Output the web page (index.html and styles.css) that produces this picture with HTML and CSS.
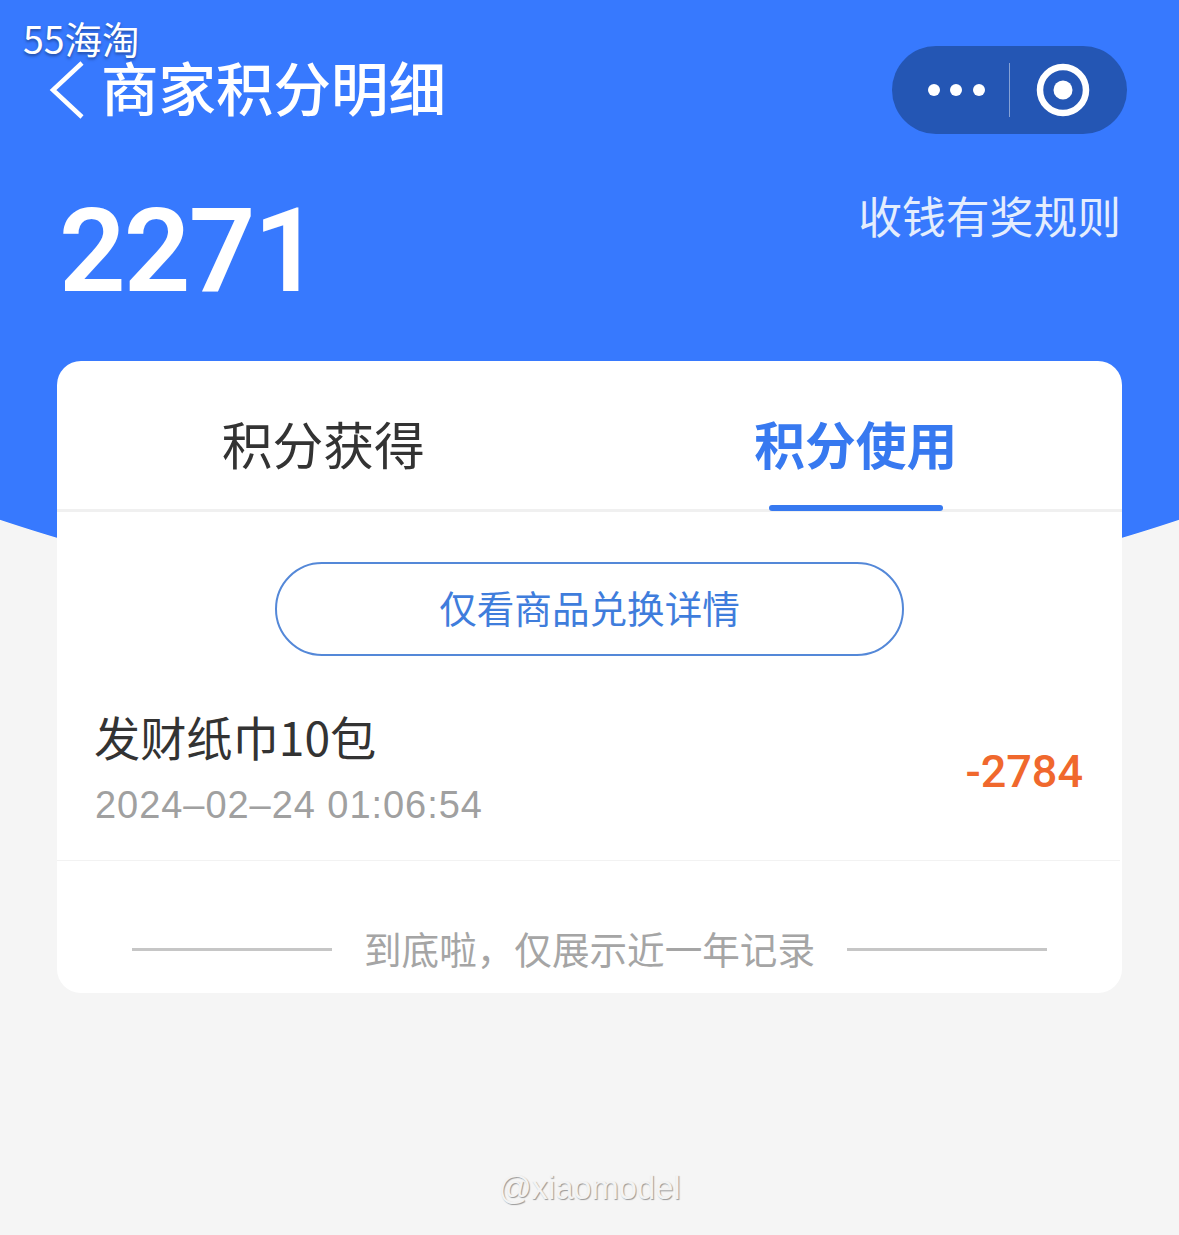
FILE: index.html
```html
<!DOCTYPE html>
<html lang="zh-CN">
<head>
<meta charset="utf-8">
<title>商家积分明细</title>
<link rel="stylesheet" href="styles.css">
</head>
<body>
<div class="page">
  <div class="app-tag">55海淘</div>
  <header class="navbar">
    <div class="nav-left">
      <svg class="back" width="36" height="58" viewBox="0 0 36 58"><path d="M33 2 L4 29 L33 56" fill="none" stroke="#fff" stroke-width="4.5"/></svg>
      <h1 class="title">商家积分明细</h1>
    </div>
    <div class="capsule">
      <svg class="cap-icon" width="235" height="88" viewBox="0 0 235 88">
        <circle cx="42" cy="44" r="6" fill="#fff"/>
        <circle cx="64" cy="44" r="6" fill="#fff"/>
        <circle cx="87" cy="44" r="6" fill="#fff"/>
        <rect x="117" y="17" width="1" height="54" fill="#fff" opacity=".45"/>
        <circle cx="171" cy="44" r="23" fill="none" stroke="#fff" stroke-width="6.5"/>
        <circle cx="171" cy="44" r="9.5" fill="#fff"/>
      </svg>
    </div>
  </header>
  <section class="summary">
    <div class="points">2271</div>
    <div class="rules">收钱有奖规则</div>
  </section>
  <main class="card">
    <div class="tabs">
      <div class="tab">积分获得</div>
      <div class="tab active">积分使用</div>
    </div>
    <div class="filter-wrap"><div class="filter">仅看商品兑换详情</div></div>
    <div class="record">
      <div class="record-info">
        <div class="record-name">发财纸巾10包</div>
        <div class="record-date">2024–02–24 01:06:54</div>
      </div>
      <div class="record-amount">-2784</div>
    </div>
    <div class="end">
      <span class="end-line"></span>
      <span class="end-text">到底啦，仅展示近一年记录</span>
      <span class="end-line"></span>
    </div>
  </main>
  <div class="watermark">@xiaomodel</div>
</div>
</body>
</html>
```
FILE: styles.css
```css
* { box-sizing: border-box; }
html, body { margin: 0; padding: 0; }
body { font-family: "Noto Sans CJK SC", "Noto Sans", sans-serif; }
.page {
  position: relative;
  width: 1179px;
  height: 1235px;
  overflow: hidden;
  background: radial-gradient(circle 1863px at 589.5px -1247px, #3779fe 99.95%, #f5f5f5 100%);
}
.app-tag {
  position: absolute;
  left: 23px;
  top: 20px;
  font-size: 37.5px;
  line-height: 36px;
  color: #fff;
  text-shadow: 0 2px 3px rgba(20, 40, 90, .55);
}
.navbar {
  display: flex;
  justify-content: space-between;
  align-items: center;
  height: 88px;
  padding: 0 52px 0 49px;
  position: relative;
  top: 46px;
}
.nav-left { display: flex; align-items: center; gap: 16px; }
.back { display: block; }
.title {
  margin: 0;
  padding-bottom: 8px;
  font-size: 57.5px;
  line-height: 56px;
  font-weight: 500;
  color: #fff;
}
.capsule {
  width: 235px;
  height: 88px;
  border-radius: 44px;
  background: #2456b4;
}
.cap-icon { display: block; }
.summary {
  display: flex;
  justify-content: space-between;
  align-items: flex-start;
  height: 227px;
  margin-top: 46px;
  padding: 0 58px 0 59px;
}
.points {
  font-family: Roboto, sans-serif;
  font-size: 117px;
  font-weight: 600;
  letter-spacing: -2px;
  line-height: 142px;
  color: #fff;
  margin-top: 46px;
}
.rules {
  font-size: 43.8px;
  line-height: 60px;
  margin-top: 51px;
  color: #e4edfd;
}
.card {
  width: 1065px;
  height: 632px;
  margin-left: 57px;
  border-radius: 24px;
  background: #fff;
  overflow: hidden;
}
.tabs {
  display: flex;
  height: 151px;
  border-bottom: 3px solid #f0f0f0;
}
.tab {
  position: relative;
  flex: 1;
  text-align: center;
  font-size: 50.8px;
  line-height: 164px;
  height: 148px;
  color: #333;
}
.tab.active {
  color: #3779f0;
  font-weight: 700;
}
.tab.active::after {
  content: "";
  position: absolute;
  left: 179px;
  bottom: -2px;
  width: 174px;
  height: 6px;
  border-radius: 3px;
  background: #3779f0;
}
.filter-wrap {
  display: flex;
  justify-content: center;
  padding-top: 50px;
}
.filter {
  width: 629px;
  height: 94px;
  border: 2px solid #5488d8;
  border-radius: 47px;
  text-align: center;
  font-size: 37.6px;
  line-height: 86px;
  color: #3f7ddc;
}
.record {
  display: flex;
  justify-content: space-between;
  align-items: center;
  height: 205px;
  width: 1063px;
  padding: 18px 37px 0 37px;
  border-bottom: 1px solid #f2f2f2;
}
.record-name {
  font-size: 46.2px;
  line-height: 66px;
  margin-top: -2px;
  color: #333;
}
.record-date {
  font-family: "Liberation Sans", sans-serif;
  font-size: 38px;
  letter-spacing: .95px;
  line-height: 50px;
  margin-top: 11px;
  margin-left: 1px;
  color: #a0a0a0;
}
.record-amount {
  font-family: Roboto, sans-serif;
  font-size: 45px;
  font-weight: 500;
  padding-top: 8px;
  color: #f0682d;
}
.end {
  display: flex;
  align-items: center;
  justify-content: center;
  height: 176px;
  margin-top: -1px;
}
.end-line {
  display: block;
  width: 200px;
  height: 3px;
  margin-top: 2px;
  background: #c6c6c6;
}
.end-text {
  margin: 0 32px;
  font-size: 37.6px;
  line-height: 54px;
  color: #a5a5a5;
}
.watermark {
  margin-top: 175px;
  text-align: center;
  font-family: "Liberation Sans", sans-serif;
  font-size: 32.7px;
  line-height: 40px;
  color: #f3f3f3;
  text-shadow: 1px 1px 1px #999;
}
```
